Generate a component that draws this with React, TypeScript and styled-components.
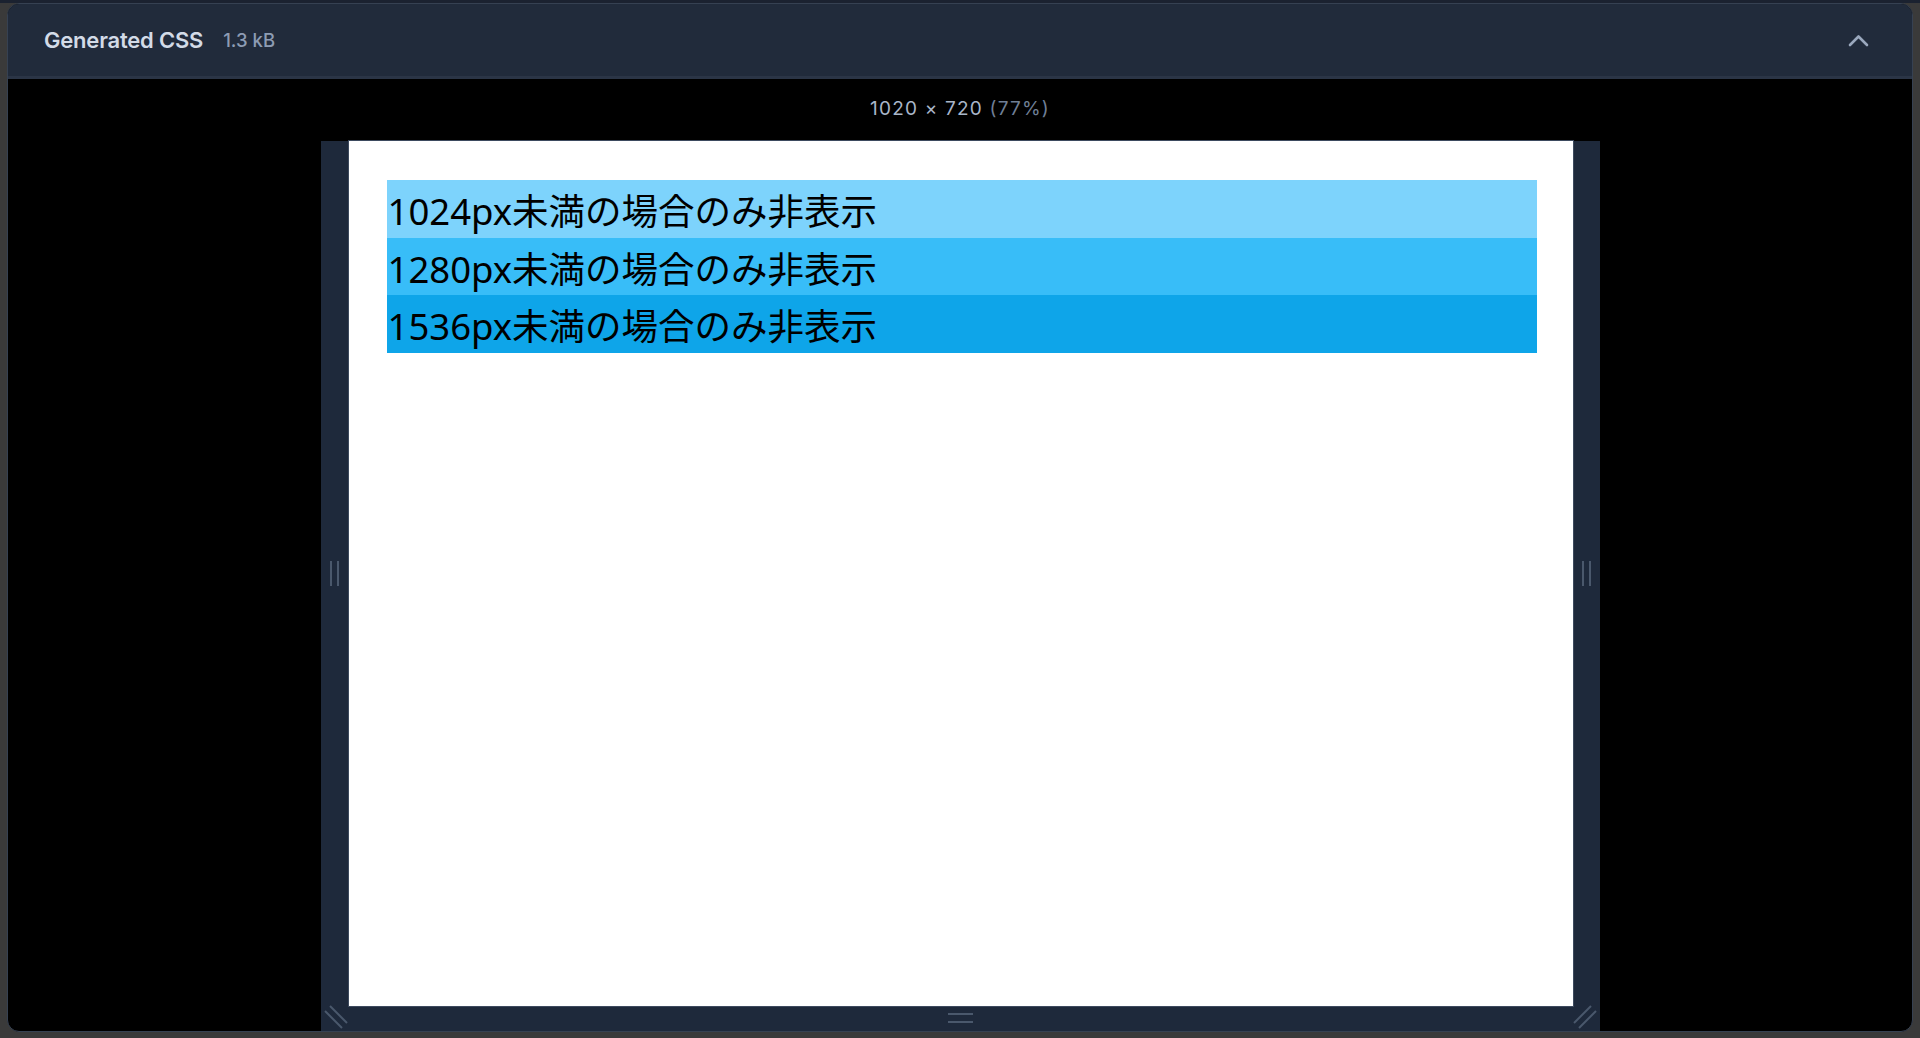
import React from "react";
import styled, { createGlobalStyle } from "styled-components";

const Global = createGlobalStyle`
  html, body { margin: 0; padding: 0; background: #3a3a3a; }
  #root { height: 1038px; }
`;

const Shell = styled.div`
  height: 1038px;
  box-sizing: border-box;
  padding: 3px 7px 6px 7px;
  background: linear-gradient(#1b2230 0 3px, #3a3a3a 3px);
`;

const Panel = styled.div`
  height: 100%;
  box-sizing: border-box;
  border: 1px solid #364152;
  border-radius: 12px;
  background: #000;
  overflow: hidden;
  display: flex;
  flex-direction: column;
`;

const Header = styled.div`
  height: 72px;
  flex: none;
  background: #212b3b;
  border-bottom: 3px solid #2b3546;
  display: flex;
  align-items: center;
  padding: 0 43px 0 36px;
  font-family: Inter, "Liberation Sans", sans-serif;
`;

const Title = styled.span`
  font-size: 22px;
  font-weight: 600;
  color: #d3dbe7;
  letter-spacing: -0.2px;
`;

const Size = styled.span`
  margin-left: 20px;
  font-size: 18.5px;
  font-weight: 500;
  color: #8d9cb3;
`;

const Spacer = styled.div`
  flex: 1;
`;

const Body = styled.div`
  flex: 1;
  display: flex;
  flex-direction: column;
  align-items: center;
  overflow: hidden;
`;

const Dims = styled.div`
  padding-top: 15px;
  line-height: 30px;
  margin-bottom: 17px;
  font-family: Inter, "Liberation Sans", sans-serif;
  font-size: 19px;
  letter-spacing: 1.2px;
  color: #a9b6c9;
`;

const Dim = styled.span`
  color: #6f7f96;
`;

const Frame = styled.div`
  display: grid;
  grid-template-columns: 28px 1224px 27px;
  grid-template-rows: 865px 26px;
  background: #1e293b;
  flex: none;
`;

const SideBar = styled.div`
  display: flex;
  align-items: center;
  justify-content: center;
  gap: 5px;
`;

const VLine = styled.div`
  width: 2px;
  height: 25px;
  background: #4a586c;
`;

const BottomBar = styled.div`
  display: flex;
  flex-direction: column;
  align-items: center;
  justify-content: center;
  gap: 6px;
  padding-bottom: 2px;
`;

const HLine = styled.div`
  width: 25px;
  height: 2px;
  background: #4a586c;
`;

const Corner = styled.div`
  svg { display: block; overflow: visible; }
`;

const Viewport = styled.div`
  background: #fff;
  box-shadow: 0 0 0 1px #3d4a5e;
  padding: 39px 36px 0 38px;
  box-sizing: border-box;
  overflow: hidden;
`;

const Row = styled.div<{ $bg: string }>`
  background: ${(p) => p.$bg};
  box-sizing: border-box;
  height: 57.6px;
  padding: 5px 0 0 1px;
  line-height: 52.6px;
  font-family: "Noto Sans", "Noto Sans CJK JP", sans-serif;
  font-size: 36.5px;
  color: #000;
  white-space: nowrap;
  overflow: hidden;
`;

const rows = [
  { label: "1024px未満の場合のみ非表示", bg: "#7dd3fc" },
  { label: "1280px未満の場合のみ非表示", bg: "#38bdf8" },
  { label: "1536px未満の場合のみ非表示", bg: "#0ea5e9" },
];

const Chevron = () => (
  <svg width="21" height="13" viewBox="0 0 21 13" fill="none">
    <polyline
      points="2,11 10.5,2.5 19,11"
      stroke="#9aa8bd"
      strokeWidth="2.6"
      strokeLinecap="round"
      strokeLinejoin="round"
    />
  </svg>
);

export default function App() {
  return (
    <>
      <Global />
      <Shell>
        <Panel>
          <Header>
            <Title>Generated CSS</Title>
            <Size>1.3 kB</Size>
            <Spacer />
            <Chevron />
          </Header>
          <Body>
            <Dims>
              1020 × 720 <Dim>(77%)</Dim>
            </Dims>
            <Frame>
              <SideBar>
                <VLine />
                <VLine />
              </SideBar>
              <Viewport>
                {rows.map((r) => (
                  <Row key={r.label} $bg={r.bg}>
                    {r.label}
                  </Row>
                ))}
              </Viewport>
              <SideBar>
                <VLine />
                <VLine />
              </SideBar>
              <Corner>
                <svg width="28" height="26" viewBox="0 0 28 26">
                  <line x1="4" y1="5" x2="21" y2="22" stroke="#4a586c" strokeWidth="2" />
                  <line x1="9" y1="0" x2="26" y2="17" stroke="#4a586c" strokeWidth="2" />
                </svg>
              </Corner>
              <BottomBar>
                <HLine />
                <HLine />
              </BottomBar>
              <Corner>
                <svg width="27" height="26" viewBox="0 0 27 26">
                  <line x1="1" y1="17" x2="18" y2="0" stroke="#4a586c" strokeWidth="2" />
                  <line x1="6" y1="22" x2="23" y2="5" stroke="#4a586c" strokeWidth="2" />
                </svg>
              </Corner>
            </Frame>
          </Body>
        </Panel>
      </Shell>
    </>
  );
}
